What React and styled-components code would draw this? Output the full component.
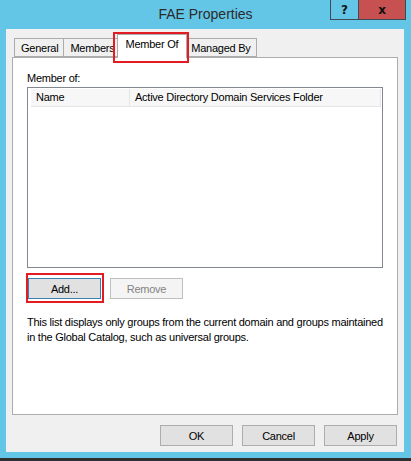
import React from "react";
import styled, { createGlobalStyle } from "styled-components";

const Global = createGlobalStyle`
  html, body { margin: 0; padding: 0; }
  body { background: #63c6e7; font-family: "Liberation Sans", Arial, sans-serif; }
`;

const Window = styled.div`
  width: 411px;
  height: 461px;
  background: #63c6e7;
  display: flex;
  flex-direction: column;
  border-bottom: 3px solid #2f2f2f;
  box-sizing: border-box;
`;

const TitleBar = styled.div`
  height: 29px;
  display: grid;
  grid-template-columns: 1fr auto 1fr;
  align-items: start;
`;

const Title = styled.div`
  grid-column: 2;
  font-family: "Liberation Sans", Arial, sans-serif;
  font-size: 14px;
  line-height: 29px;
  color: #2b2b2b;
`;

const CaptionButtons = styled.div`
  grid-column: 3;
  justify-self: end;
  margin-right: 5px;
  display: flex;
  border: 1px solid #3d4a52;
  border-top: none;
  height: 19px;
`;

const CaptionButton = styled.div`
  width: ${(p) => p.$w}px;
  height: 19px;
  background: ${(p) => p.$bg};
  display: flex;
  align-items: center;
  justify-content: center;
  font-family: "DejaVu Sans", sans-serif;
  font-weight: bold;
  font-size: 12px;
  color: #111;
  border-left: ${(p) => (p.$divider ? "1px solid #3d4a52" : "none")};
`;

const Client = styled.div`
  margin: 0 7px 0 6px;
  height: 423px;
  background: #f0f0f0;
  display: flex;
  flex-direction: column;
  font-family: "Liberation Sans", Arial, sans-serif;
  font-size: 11px;
  letter-spacing: -0.25px;
  color: #000;
`;

const TabStrip = styled.div`
  display: flex;
  align-items: flex-end;
  height: 28px;
  padding-left: 8px;
  position: relative;
  z-index: 1;
`;

const Tab = styled.div`
  position: relative;
  height: 19px;
  padding: 0 5px 0 6px;
  background: #f0f0f0;
  border: 1px solid #acacac;
  border-left: ${(p) => (p.$noLeft ? "none" : "1px solid #acacac")};
  box-sizing: border-box;
  display: flex;
  align-items: center;
  white-space: nowrap;
  z-index: 1;
`;

const ActiveTab = styled.div`
  position: relative;
  height: 24px;
  padding: 3px 8px 0 7px;
  margin: 0 -2px -1px -3px;
  background: #fff;
  border: 1px solid #acacac;
  border-bottom: none;
  box-sizing: border-box;
  white-space: nowrap;
  z-index: 2;
`;

const Highlight = styled.div`
  position: absolute;
  left: ${(p) => p.$l}px;
  top: ${(p) => p.$t}px;
  right: ${(p) => p.$r}px;
  bottom: ${(p) => p.$b}px;
  border: 2px solid #e31b23;
  pointer-events: none;
`;

const Panel = styled.div`
  margin: 0 6px;
  height: 358px;
  box-sizing: border-box;
  background: #fff;
  border: 1px solid #adadad;
  padding: 11px 14px 0 14px;
  display: flex;
  flex-direction: column;
`;

const Label = styled.div`
  height: 18px;
  line-height: 18px;
`;

const ListBox = styled.div`
  height: 181px;
  box-sizing: border-box;
  border: 1px solid #828790;
  padding: 1px 1px 0 3px;
  background: #fff;
`;

const HeaderRow = styled.div`
  display: flex;
  height: 17px;
  background: #f7f7f7;
  border-bottom: 1px solid #e5e5e5;
`;

const HeaderCell = styled.div`
  width: ${(p) => (p.$w ? `${p.$w}px` : "auto")};
  flex: ${(p) => (p.$w ? "none" : 1)};
  padding-left: 5px;
  line-height: 17px;
  border-right: 1px solid #e5e5e5;
  box-sizing: border-box;
  white-space: nowrap;
`;

const ButtonRow = styled.div`
  display: flex;
  gap: 9px;
  margin-top: 10px;
  padding-left: 1px;
`;

const Button = styled.div`
  position: relative;
  width: 73px;
  height: 21px;
  box-sizing: border-box;
  display: flex;
  align-items: center;
  justify-content: center;
  background: ${(p) => (p.$disabled ? "#f4f4f4" : "#e1e1e1")};
  border: 1px solid
    ${(p) => (p.$default ? "#3c7fb1" : p.$disabled ? "#bfbfbf" : "#adadad")};
  color: ${(p) => (p.$disabled ? "#838383" : "#000")};
`;

const Description = styled.div`
  margin-top: 16px;
  line-height: 15px;
  white-space: nowrap;
`;

const Footer = styled.div`
  display: flex;
  justify-content: flex-end;
  gap: 9px;
  padding: 10px 7px 0 0;
`;

export default function App() {
  return (
    <>
      <Global />
      <Window>
        <TitleBar>
          <Title>FAE Properties</Title>
          <CaptionButtons>
            <CaptionButton $w={27} $bg="#63c6e7">?</CaptionButton>
            <CaptionButton $w={46} $bg="#c75050" $divider>
              x
            </CaptionButton>
          </CaptionButtons>
        </TitleBar>
        <Client>
          <TabStrip>
            <Tab>General</Tab>
            <Tab $noLeft>Members</Tab>
            <ActiveTab>
              Member Of
              <Highlight $l={-5} $t={-3} $r={-3} $b={-5} />
            </ActiveTab>
            <Tab $noLeft>Managed By</Tab>
          </TabStrip>
          <Panel>
            <Label>Member of:</Label>
            <ListBox>
              <HeaderRow>
                <HeaderCell $w={99}>Name</HeaderCell>
                <HeaderCell>Active Directory Domain Services Folder</HeaderCell>
              </HeaderRow>
            </ListBox>
            <ButtonRow>
              <Button $default>
                Add...
                <Highlight $l={-3} $t={-6} $r={-4} $b={-5} />
              </Button>
              <Button $disabled>Remove</Button>
            </ButtonRow>
            <Description>
              This list displays only groups from the current domain and groups maintained
              <br />
              in the Global Catalog, such as universal groups.
            </Description>
          </Panel>
          <Footer>
            <Button>OK</Button>
            <Button>Cancel</Button>
            <Button>Apply</Button>
          </Footer>
        </Client>
      </Window>
    </>
  );
}
